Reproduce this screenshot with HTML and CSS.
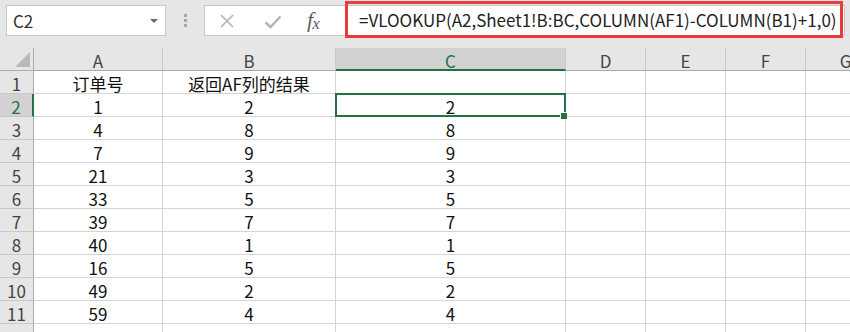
FILE: index.html
```html
<!DOCTYPE html>
<html lang="zh">
<head>
<meta charset="utf-8">
<title>Excel VLOOKUP</title>
<link rel="stylesheet" href="styles.css">
</head>
<body>
<div class="app">
  <div class="toolbar">
    <div class="namebox">
      <span class="name">C2</span>
      <span class="dropdown"></span>
    </div>
    <div class="grip"><i></i><i></i><i></i></div>
    <div class="fbox">
      <div class="icons">
        <svg class="ico ico-x" width="16" height="16" viewBox="0 0 16 16"><path d="M2 2 L14 14 M14 2 L2 14" stroke="#b3b3b3" stroke-width="1.6" fill="none"/></svg>
        <svg class="ico ico-check" width="18" height="14" viewBox="0 0 18 14"><path d="M1.5 7.5 L6.5 12 L16.5 1.5" stroke="#b3b3b3" stroke-width="2.4" fill="none"/></svg>
        <span class="fx">f<span class="fx-x">x</span></span>
      </div>
      <div class="formula">=VLOOKUP(A2,Sheet1!B:BC,COLUMN(AF1)-COLUMN(B1)+1,0)</div>
    </div>
  </div>
  <div class="sheet">
    <div class="corner"><span class="tri"></span></div>
    <div class="ch">A</div>
    <div class="ch">B</div>
    <div class="ch sel">C</div>
    <div class="ch">D</div>
    <div class="ch">E</div>
    <div class="ch">F</div>
    <div class="ch">G</div>

    <div class="rh">1</div><div class="c">订单号</div><div class="c">返回AF列的结果</div><div class="c"></div><div class="c"></div><div class="c"></div><div class="c"></div><div class="c"></div>
    <div class="rh sel">2</div><div class="c">1</div><div class="c">2</div><div class="c active">2<span class="handle"></span></div><div class="c"></div><div class="c"></div><div class="c"></div><div class="c"></div>
    <div class="rh">3</div><div class="c">4</div><div class="c">8</div><div class="c">8</div><div class="c"></div><div class="c"></div><div class="c"></div><div class="c"></div>
    <div class="rh">4</div><div class="c">7</div><div class="c">9</div><div class="c">9</div><div class="c"></div><div class="c"></div><div class="c"></div><div class="c"></div>
    <div class="rh">5</div><div class="c">21</div><div class="c">3</div><div class="c">3</div><div class="c"></div><div class="c"></div><div class="c"></div><div class="c"></div>
    <div class="rh">6</div><div class="c">33</div><div class="c">5</div><div class="c">5</div><div class="c"></div><div class="c"></div><div class="c"></div><div class="c"></div>
    <div class="rh">7</div><div class="c">39</div><div class="c">7</div><div class="c">7</div><div class="c"></div><div class="c"></div><div class="c"></div><div class="c"></div>
    <div class="rh">8</div><div class="c">40</div><div class="c">1</div><div class="c">1</div><div class="c"></div><div class="c"></div><div class="c"></div><div class="c"></div>
    <div class="rh">9</div><div class="c">16</div><div class="c">5</div><div class="c">5</div><div class="c"></div><div class="c"></div><div class="c"></div><div class="c"></div>
    <div class="rh">10</div><div class="c">49</div><div class="c">2</div><div class="c">2</div><div class="c"></div><div class="c"></div><div class="c"></div><div class="c"></div>
    <div class="rh">11</div><div class="c">59</div><div class="c">4</div><div class="c">4</div><div class="c"></div><div class="c"></div><div class="c"></div><div class="c"></div>
    <div class="rh"></div><div class="c"></div><div class="c"></div><div class="c"></div><div class="c"></div><div class="c"></div><div class="c"></div><div class="c"></div>
  </div>
</div>
</body>
</html>
```
FILE: styles.css
```css
* { box-sizing: border-box; }
html, body {
  margin: 0;
  padding: 0;
  width: 850px;
  height: 332px;
  overflow: hidden;
  background: #ffffff;
  font-family: "Noto Sans CJK SC", "Noto Sans", sans-serif;
}
.app {
  display: flex;
  flex-direction: column;
  width: 850px;
  height: 332px;
  overflow: hidden;
}
.toolbar {
  height: 48px;
  flex: none;
  background: #e6e6e6;
  display: flex;
  align-items: flex-start;
  padding-top: 5px;
  padding-left: 6px;
}
.namebox {
  width: 160px;
  height: 31px;
  background: #fff;
  border: 1px solid #c6c6c6;
  display: flex;
  align-items: center;
  justify-content: space-between;
  padding: 0 7px 0 6px;
}
.name {
  font-size: 17px;
  color: #333;
  line-height: 1;
}
.dropdown {
  width: 0;
  height: 0;
  border-left: 4px solid transparent;
  border-right: 4px solid transparent;
  border-top: 4px solid #6a6a6a;
}
.grip {
  width: 38px;
  height: 31px;
  display: flex;
  flex-direction: column;
  align-items: center;
  justify-content: center;
  gap: 2px;
}
.grip i {
  display: block;
  width: 3px;
  height: 3px;
  background: #a6a6a6;
}
.fbox {
  width: 641px;
  height: 31px;
  background: #fff;
  border: 1px solid #c6c6c6;
  display: flex;
  align-items: center;
}
.icons {
  width: 143px;
  height: 29px;
  flex: none;
  display: flex;
  align-items: center;
}
.ico { display: block; flex: none; }
.ico-x { margin-left: 14px; }
.ico-check { margin-left: 29px; margin-top: 3px; }
.fx {
  font-family: "Liberation Serif", "DejaVu Serif", serif;
  font-style: italic;
  font-size: 22px;
  color: #5f5f5f;
  margin-left: 25px;
  line-height: 1;
  margin-top: -1px;
  letter-spacing: -1px;
}
.fx-x {
  font-size: 17px;
  position: relative;
  top: 2px;
}
.formula {
  align-self: flex-start;
  margin-top: -2px;
  width: 492px;
  height: 31px;
  flex: none;
  outline: 3px solid #ea3a3d;
  padding-left: 11px;
  font-size: 17px;
  line-height: 31px;
  color: #222;
  white-space: nowrap;
  overflow: hidden;
}
.sheet {
  display: grid;
  grid-template-columns: 34px 129px 173px 230px 80px 80px 80px 80px;
  grid-auto-rows: 23px;
  flex: none;
}
.corner, .ch, .rh {
  background: #e6e6e6;
  color: #444;
  font-size: 17px;
}
.corner {
  position: relative;
  border-right: 1px solid #ababab;
  border-bottom: 1px solid #ababab;
}
.tri {
  position: absolute;
  right: 3px;
  bottom: 3px;
  width: 0;
  height: 0;
  border-left: 15px solid transparent;
  border-bottom: 15px solid #b9b9b9;
}
.ch {
  border-right: 1px solid #c8c8c8;
  border-bottom: 1px solid #ababab;
  text-align: center;
  line-height: 21px;
  padding-top: 2px;
}
.ch.sel {
  background: #d2d2d2;
  color: #217346;
  border-bottom: 2px solid #217346;
}
.rh {
  border-right: 1px solid #ababab;
  border-bottom: 1px solid #c8c8c8;
  text-align: center;
  line-height: 21px;
  padding-top: 2px;
}
.rh.sel {
  background: #d2d2d2;
  color: #217346;
  border-right: 2px solid #217346;
}
.c {
  border-right: 1px solid #d4d4d4;
  border-bottom: 1px solid #d4d4d4;
  text-align: center;
  font-size: 17px;
  line-height: 21px;
  padding-top: 2px;
  color: #111;
  white-space: nowrap;
}
.c.active {
  position: relative;
}
.c.active::after {
  content: "";
  position: absolute;
  left: -1px;
  top: -1px;
  right: -1px;
  bottom: -1px;
  border: 2px solid #217346;
  pointer-events: none;
}
.handle {
  position: absolute;
  right: -2px;
  bottom: -3px;
  width: 7px;
  height: 7px;
  background: #217346;
  border-left: 1px solid #fff;
  border-top: 1px solid #fff;
  z-index: 1;
}
```
